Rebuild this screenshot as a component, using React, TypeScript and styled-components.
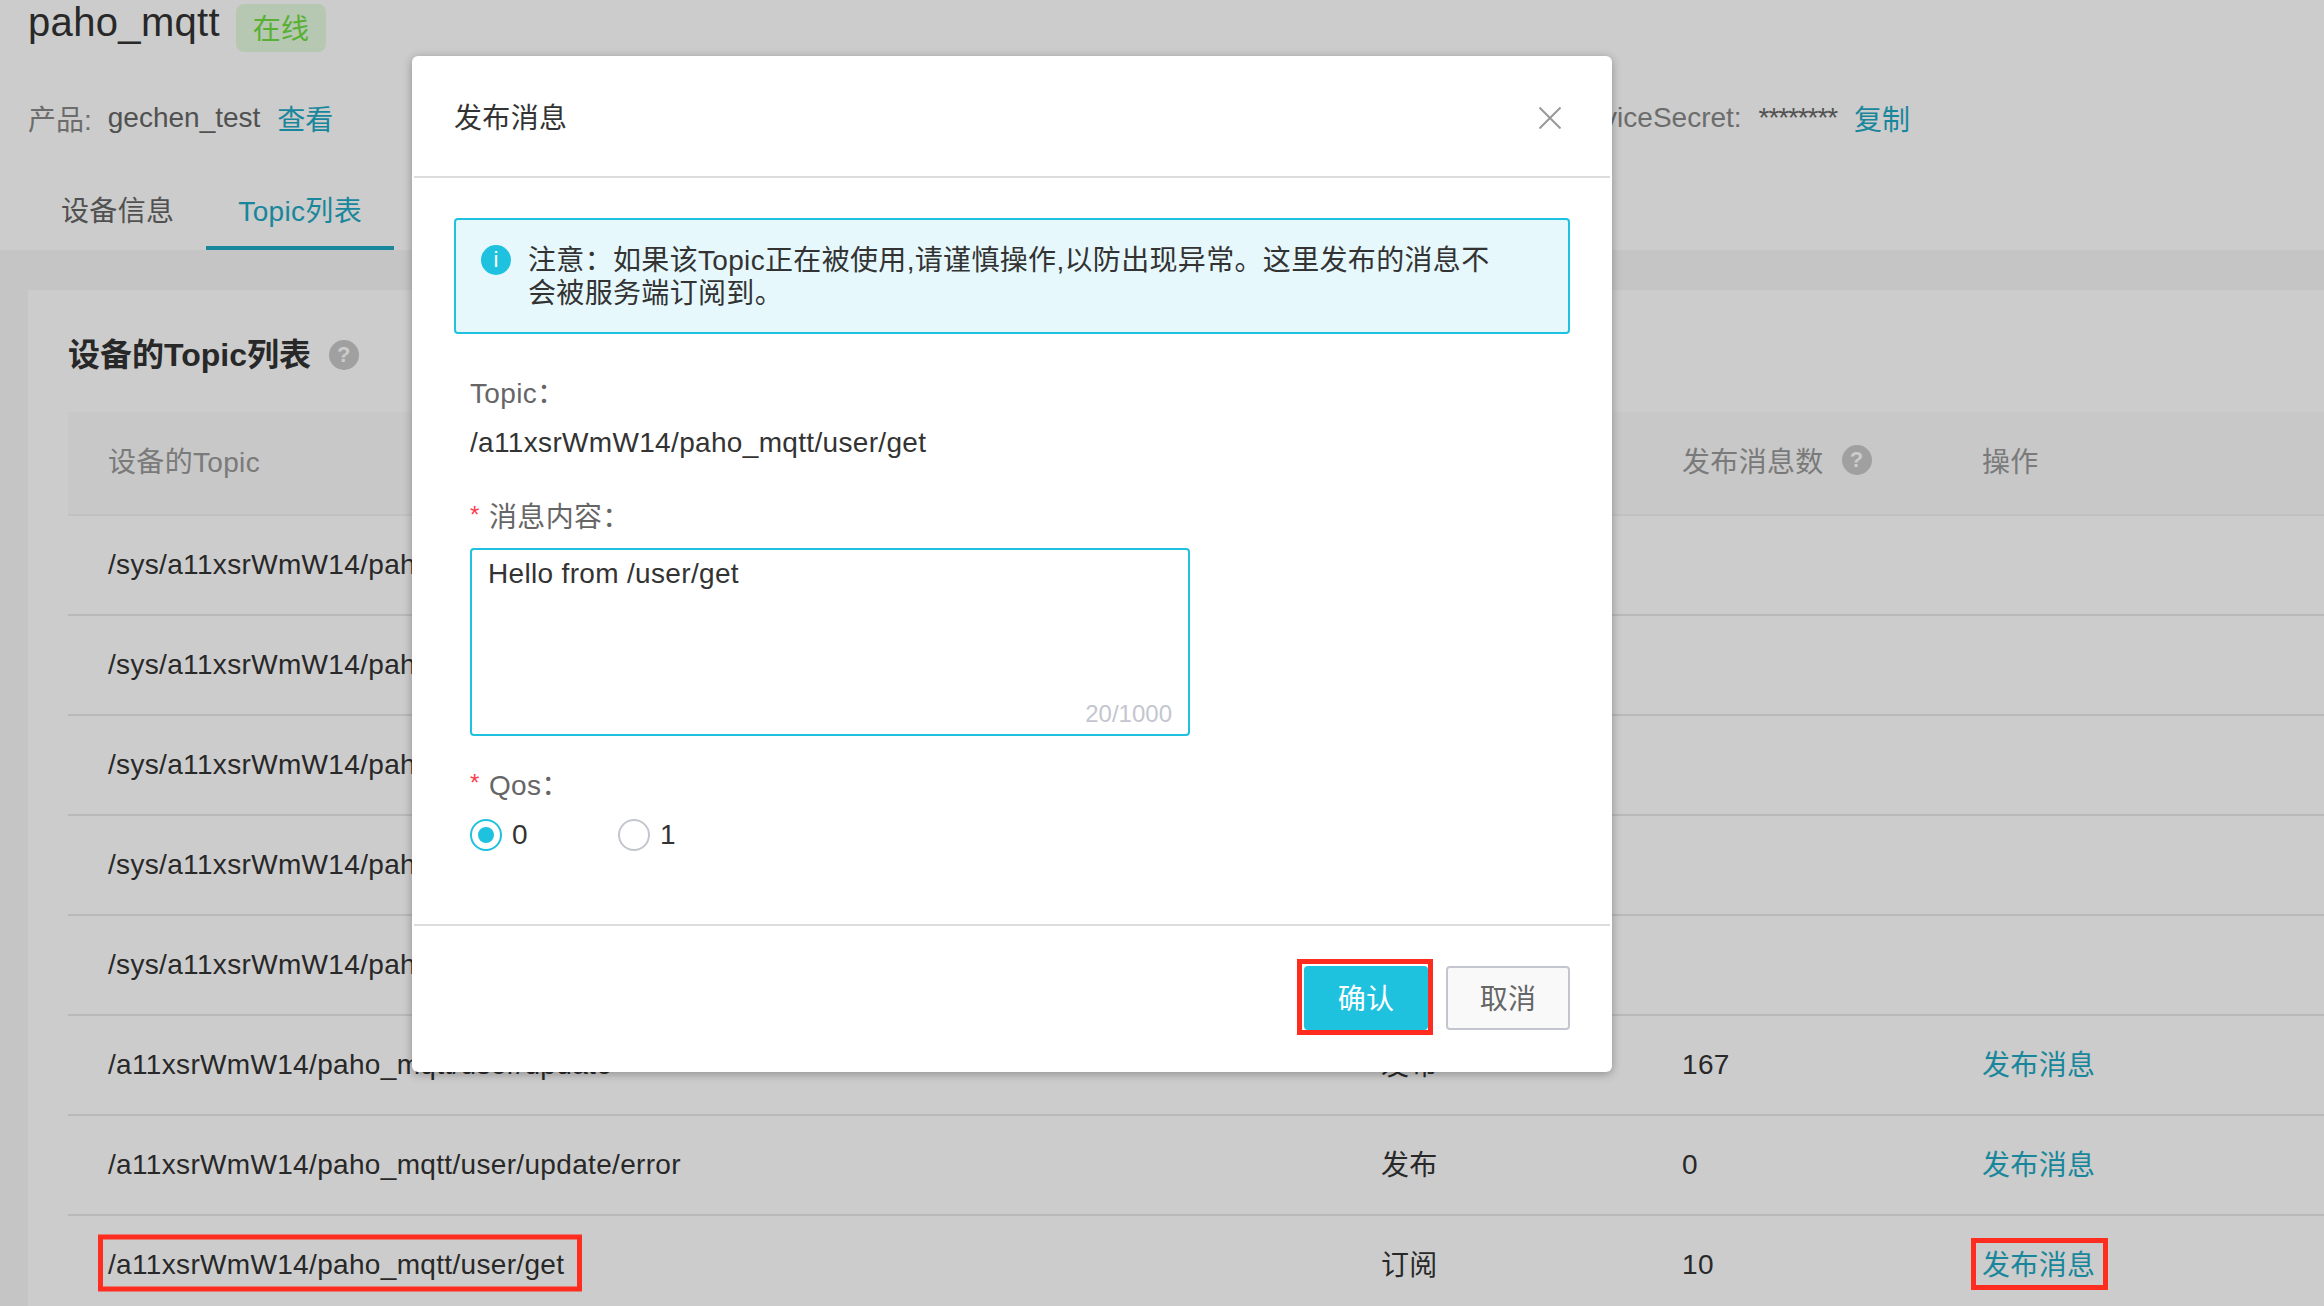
import React from "react";
import styled, { createGlobalStyle } from "styled-components";

const Global = createGlobalStyle`
  html, body { margin: 0; padding: 0; background: #f7f7f7; }
  *, *::before, *::after { box-sizing: border-box; }
  body {
    font-family: "Liberation Sans", "Noto Sans CJK SC", sans-serif;
    font-size: 28px;
    letter-spacing: 0.33px;
    color: #333;
  }
`;

const Page = styled.div`
  position: relative;
  width: 2324px;
  height: 1306px;
  overflow: hidden;
  background: #f7f7f7;
`;
const Header = styled.header`
  height: 250px;
  background: #fff;
  padding: 4px 0 0 29px;
  display: flex;
  flex-direction: column;
`;
const TitleRow = styled.div`
  display: flex;
  align-items: center;
  height: 48px;
  gap: 16px;
`;
const Title = styled.h1`
  margin: -11px 0 0 -1px;
  font-size: 40px;
  font-weight: 400;
  color: #333;
`;
const Badge = styled.span`
  width: 90px;
  height: 48px;
  padding-bottom: 2px;
  border-radius: 8px;
  background: #e5fadf;
  color: #6fdd41;
  display: flex;
  align-items: center;
  justify-content: center;
`;
const InfoRow = styled.div`
  margin-top: 46px;
  height: 40px;
  padding-right: 414px;
  display: flex;
  align-items: center;
  justify-content: space-between;
  letter-spacing: 0;
`;
const InfoGroup = styled.div`
  display: flex;
  align-items: center;
  gap: 17px;
  color: #666;
`;
const InfoKey = styled.span`
  color: #888;
`;
const ProductKey = styled(InfoKey)`
  margin: 0 -1px 0 -1px;
`;
const Secret = styled.span`
  letter-spacing: -1.1px;
`;
const Link = styled.a`
  color: #1fa9c4;
`;
const Tabs = styled.nav`
  margin-top: auto;
  display: flex;
`;
const Tab = styled.div<{ $active?: boolean }>`
  height: 80px;
  padding: 2px 32px 0;
  display: flex;
  align-items: center;
  color: ${(p) => (p.$active ? "#1fa9c4" : "#666")};
  border-bottom: 4px solid ${(p) => (p.$active ? "#1fa9c4" : "transparent")};
`;
const Content = styled.main`
  padding: 40px 0 0 28px;
`;
const Card = styled.section`
  background: #fff;
  width: 2400px;
`;
const CardTitle = styled.div`
  height: 122px;
  padding: 45px 0 0 40px;
  display: flex;
  align-items: flex-start;
  gap: 18px;
`;
const CardHeading = styled.h2`
  margin: 0;
  font-size: 32px;
  line-height: 40px;
  font-weight: 700;
  letter-spacing: 0;
  color: #333;
`;
const Help = styled.span<{ $top?: number }>`
  width: 30px;
  height: 30px;
  border-radius: 50%;
  background: #c8c8c8;
  color: #fff;
  font-size: 22px;
  font-weight: 700;
  display: inline-flex;
  align-items: center;
  justify-content: center;
  margin-top: ${(p) => p.$top ?? 0}px;
`;
const Table = styled.div`
  margin-left: 40px;
`;
const Row = styled.div<{ $head?: boolean }>`
  display: grid;
  grid-template-columns: 1313px 301px 300px 1fr;
  align-items: center;
  height: ${(p) => (p.$head ? 104 : 100)}px;
  padding-bottom: ${(p) => (p.$head ? 6 : 0)}px;
  background: ${(p) => (p.$head ? "#fafafa" : "#fff")};
  color: ${(p) => (p.$head ? "#999" : "#333")};
  border-bottom: 2px solid ${(p) => (p.$head ? "#f2f2f2" : "#e8e8e8")};
`;
const TopicCell = styled.div`
  padding-left: 40px;
  white-space: nowrap;
`;
const Cell = styled.div<{ $cjk?: boolean }>`
  display: flex;
  align-items: center;
  gap: 18px;
  padding-bottom: ${(p) => (p.$cjk ? 5 : 0)}px;
`;
const Marked = styled.span<{ $l: number; $r: number; $h: number; $shift?: number }>`
  position: relative;
  display: inline-flex;
  align-items: center;
  &::after {
    content: "";
    position: absolute;
    z-index: 20;
    left: -${(p) => p.$l}px;
    right: -${(p) => p.$r}px;
    top: calc(50% + ${(p) => p.$shift ?? 0}px);
    height: ${(p) => p.$h}px;
    transform: translateY(-50%);
    border: 5px solid #ff2d1f;
  }
`;
const Backdrop = styled.div`
  position: absolute;
  inset: 0;
  z-index: 10;
  background: rgba(0, 0, 0, 0.2);
`;
const Modal = styled.div`
  position: absolute;
  z-index: 11;
  left: 412px;
  top: 56px;
  width: 1200px;
  height: 1016px;
  background: #fff;
  border-radius: 6px;
  padding: 0 2px;
  box-shadow: 0 2px 10px rgba(0, 0, 0, 0.3);
  display: flex;
  flex-direction: column;
`;
const ModalHeader = styled.div`
  height: 122px;
  flex: none;
  padding: 0 49px 0 40px;
  display: flex;
  align-items: center;
  justify-content: space-between;
  border-bottom: 2px solid #dcdcdc;
  color: #333;
`;
const CloseIcon = styled.svg`
  width: 22px;
  height: 22px;
  margin-top: 3px;
  stroke: #999;
  stroke-width: 2;
  fill: none;
`;
const ModalBody = styled.div`
  flex: 1;
  padding: 40px 40px 0;
`;
const Alert = styled.div`
  height: 116px;
  padding: 24px 70px 0 25px;
  display: flex;
  gap: 17px;
  border: 2px solid #1fc2de;
  border-radius: 4px;
  background: #e6f8fc;
`;
const InfoIcon = styled.span`
  flex: none;
  width: 30px;
  height: 30px;
  margin-top: 1px;
  border-radius: 50%;
  background: #1fc2de;
  color: #fff;
  font-size: 22px;
  display: flex;
  align-items: center;
  justify-content: center;
`;
const AlertText = styled.div`
  line-height: 33px;
  color: #333;
`;
const Form = styled.div`
  padding: 41px 0 0 16px;
`;
const Label = styled.div<{ $latin?: boolean }>`
  display: flex;
  align-items: center;
  height: 36px;
  padding-bottom: ${(p) => (p.$latin ? 5 : 0)}px;
  color: #666;
`;
const Star = styled.span`
  width: 19px;
  color: #ff3b4e;
  font-size: 24px;
`;
const Value = styled.div`
  margin-top: 14px;
  height: 36px;
  line-height: 36px;
  color: #333;
`;
const FormGroup = styled.div<{ $top: number }>`
  margin-top: ${(p) => p.$top}px;
`;
const TextBox = styled.div`
  width: 720px;
  height: 188px;
  margin-top: 15px;
  padding: 8px 16px 6px 16px;
  border: 2px solid #1fc2de;
  border-radius: 4px;
  display: flex;
  flex-direction: column;
  justify-content: space-between;
  color: #333;
`;
const Count = styled.div`
  align-self: flex-end;
  font-size: 24px;
  letter-spacing: 0;
  color: #c4c6cf;
`;
const RadioRow = styled.div`
  margin-top: 16px;
  display: flex;
  gap: 10px;
  height: 32px;
  align-items: center;
`;
const Radio = styled.span<{ $on?: boolean }>`
  width: 32px;
  height: 32px;
  border-radius: 50%;
  border: 2px solid ${(p) => (p.$on ? "#1fc2de" : "#c4c6cf")};
  display: flex;
  align-items: center;
  justify-content: center;
  &::before {
    content: "";
    width: 16px;
    height: 16px;
    border-radius: 50%;
    background: ${(p) => (p.$on ? "#1fc2de" : "transparent")};
  }
`;
const RadioLabel = styled.span`
  width: 96px;
  color: #333;
  &:last-child { width: auto; }
`;
const ModalFooter = styled.div`
  flex: none;
  height: 148px;
  padding: 40px 40px 0 0;
  border-top: 2px solid #dcdcdc;
  display: flex;
  justify-content: flex-end;
  gap: 18px;
`;
const Button = styled.button<{ $primary?: boolean }>`
  position: relative;
  width: 124px;
  height: 64px;
  padding-bottom: 3px;
  border-radius: 4px;
  font: inherit;
  letter-spacing: inherit;
  color: ${(p) => (p.$primary ? "#fff" : "#666")};
  background: ${(p) => (p.$primary ? "#1fc2de" : "#f9f9f9")};
  border: ${(p) => (p.$primary ? "none" : "2px solid #c4c6cf")};
  ${(p) =>
    p.$primary
      ? `&::after {
    content: "";
    position: absolute;
    left: -7px; right: -5px; top: -7px; bottom: -5px;
    border: 5px solid #ff2d1f;
  }`
      : ""}
`;

const sysRows = [
  "/sys/a11xsrWmW14/paho_mqtt/thing/event/property/post",
  "/sys/a11xsrWmW14/paho_mqtt/thing/service/property/set",
  "/sys/a11xsrWmW14/paho_mqtt/thing/deviceinfo/update",
  "/sys/a11xsrWmW14/paho_mqtt/thing/deviceinfo/delete",
  "/sys/a11xsrWmW14/paho_mqtt/thing/event/+/post",
];

const COLON = "\uFF1A";

export default function App() {
  return (
    <Page>
      <Global />
      <Header>
        <TitleRow>
          <Title>paho_mqtt</Title>
          <Badge>在线</Badge>
        </TitleRow>
        <InfoRow>
          <InfoGroup>
            <ProductKey>产品:</ProductKey>
            <span>gechen_test</span>
            <Link>查看</Link>
          </InfoGroup>
          <InfoGroup>
            <InfoKey>DeviceSecret:</InfoKey>
            <Secret>********</Secret>
            <Link>复制</Link>
          </InfoGroup>
        </InfoRow>
        <Tabs>
          <Tab>设备信息</Tab>
          <Tab $active>Topic列表</Tab>
        </Tabs>
      </Header>
      <Content>
        <Card>
          <CardTitle>
            <CardHeading>设备的Topic列表</CardHeading>
            <Help $top={5}>?</Help>
          </CardTitle>
          <Table>
            <Row $head>
              <TopicCell>设备的Topic</TopicCell>
              <Cell>权限</Cell>
              <Cell>
                发布消息数<Help>?</Help>
              </Cell>
              <Cell>操作</Cell>
            </Row>
            {sysRows.map((t) => (
              <Row key={t}>
                <TopicCell>{t}</TopicCell>
                <Cell $cjk>发布</Cell>
                <Cell />
                <Cell />
              </Row>
            ))}
            <Row>
              <TopicCell>/a11xsrWmW14/paho_mqtt/user/update</TopicCell>
              <Cell $cjk>发布</Cell>
              <Cell>167</Cell>
              <Cell $cjk><Link>发布消息</Link></Cell>
            </Row>
            <Row>
              <TopicCell>/a11xsrWmW14/paho_mqtt/user/update/error</TopicCell>
              <Cell $cjk>发布</Cell>
              <Cell>0</Cell>
              <Cell $cjk><Link>发布消息</Link></Cell>
            </Row>
            <Row>
              <TopicCell>
                <Marked $l={10} $r={18} $h={57} $shift={-2}>/a11xsrWmW14/paho_mqtt/user/get</Marked>
              </TopicCell>
              <Cell $cjk>订阅</Cell>
              <Cell>10</Cell>
              <Cell $cjk>
                <Marked $l={11} $r={13} $h={52} $shift={1}><Link>发布消息</Link></Marked>
              </Cell>
            </Row>
          </Table>
        </Card>
      </Content>
      <Backdrop />
      <Modal>
        <ModalHeader>
          <span>发布消息</span>
          <CloseIcon viewBox="0 0 22 22">
            <path d="M0.5 0.5 L21.5 21.5 M21.5 0.5 L0.5 21.5" />
          </CloseIcon>
        </ModalHeader>
        <ModalBody>
          <Alert>
            <InfoIcon>i</InfoIcon>
            <AlertText>{`注意${COLON}如果该Topic正在被使用,请谨慎操作,以防出现异常。这里发布的消息不会被服务端订阅到。`}</AlertText>
          </Alert>
          <Form>
            <Label $latin>{`Topic${COLON}`}</Label>
            <Value>/a11xsrWmW14/paho_mqtt/user/get</Value>
            <FormGroup $top={36}>
              <Label><Star>*</Star>{`消息内容${COLON}`}</Label>
              <TextBox>
                <span>Hello from /user/get</span>
                <Count>20/1000</Count>
              </TextBox>
            </FormGroup>
            <FormGroup $top={31}>
              <Label $latin><Star>*</Star>{`Qos${COLON}`}</Label>
              <RadioRow>
                <Radio $on />
                <RadioLabel>0</RadioLabel>
                <Radio />
                <RadioLabel>1</RadioLabel>
              </RadioRow>
            </FormGroup>
          </Form>
        </ModalBody>
        <ModalFooter>
          <Button $primary>确认</Button>
          <Button>取消</Button>
        </ModalFooter>
      </Modal>
    </Page>
  );
}
